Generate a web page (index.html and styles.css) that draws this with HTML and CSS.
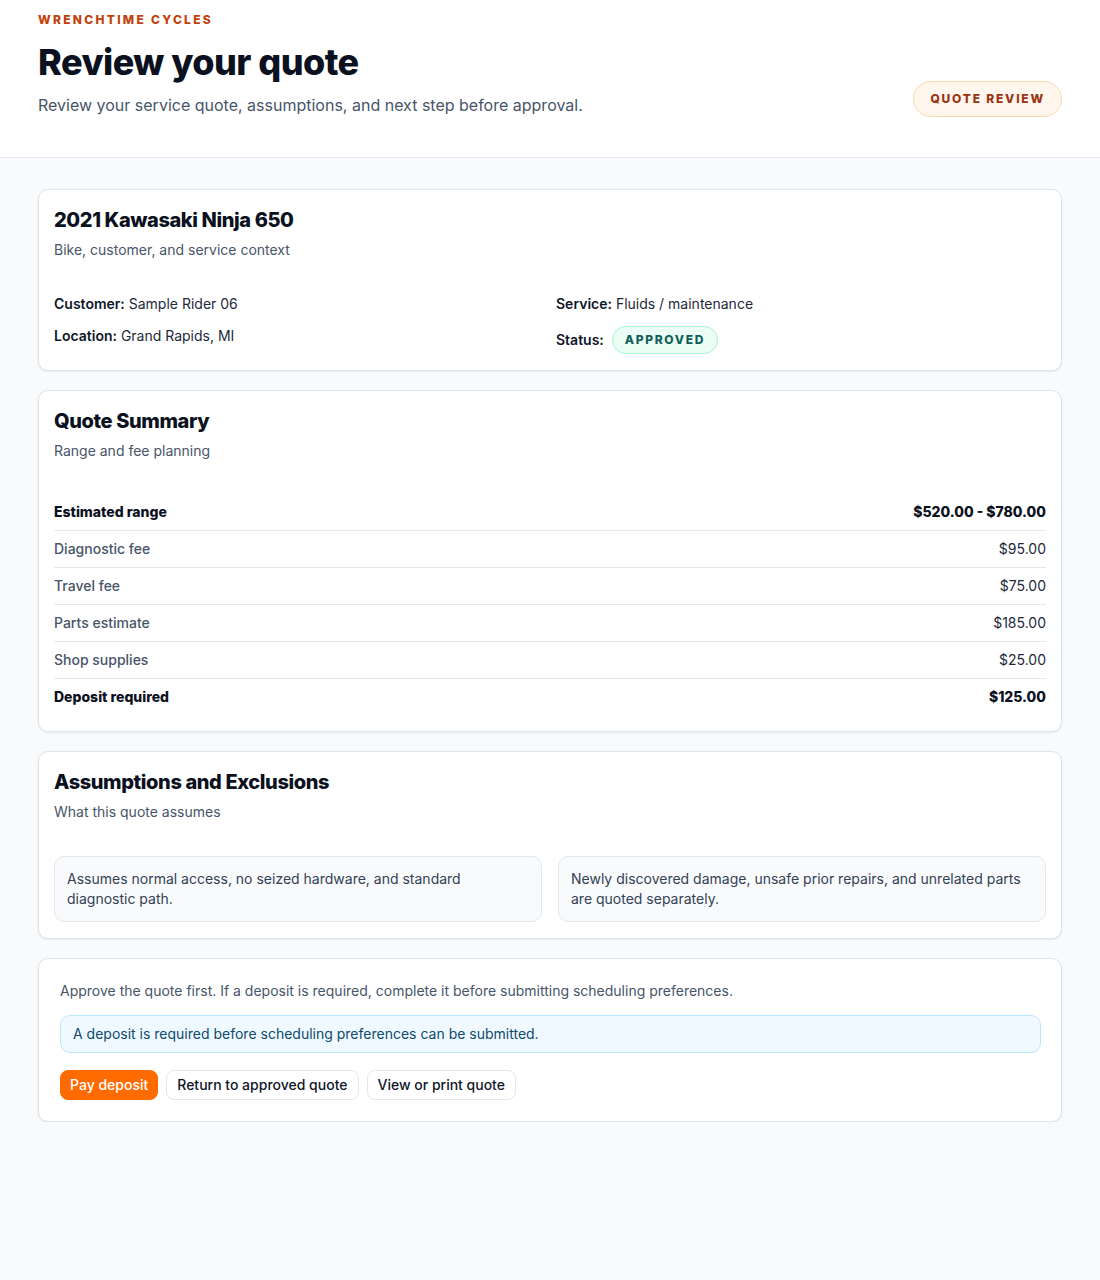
FILE: index.html
```html
<!DOCTYPE html>
<html lang="en">
<head>
    <meta charset="UTF-8">
    <meta name="viewport" content="width=device-width, initial-scale=1.0">
    <title>Review your quote</title>
    <link rel="stylesheet" href="styles.css">
</head>
<body>
    <header class="page-header">
        <div class="header-inner">
            <div class="header-text">
                <div class="brand">Wrenchtime Cycles</div>
                <h1>Review your quote</h1>
                <p class="lead">Review your service quote, assumptions, and next step before approval.</p>
            </div>
            <span class="pill pill-orange">Quote review</span>
        </div>
    </header>

    <main class="content">
        <section class="card">
            <h2>2021 Kawasaki Ninja 650</h2>
            <p class="card-sub">Bike, customer, and service context</p>
            <div class="details">
                <div class="detail"><strong>Customer:</strong> Sample Rider 06</div>
                <div class="detail"><strong>Service:</strong> Fluids / maintenance</div>
                <div class="detail"><strong>Location:</strong> Grand Rapids, MI</div>
                <div class="detail detail-status"><strong>Status:</strong> <span class="pill pill-green">Approved</span></div>
            </div>
        </section>

        <section class="card">
            <h2>Quote Summary</h2>
            <p class="card-sub">Range and fee planning</p>
            <div class="summary">
                <div class="row row-bold"><span>Estimated range</span><span>$520.00 - $780.00</span></div>
                <div class="row"><span>Diagnostic fee</span><span>$95.00</span></div>
                <div class="row"><span>Travel fee</span><span>$75.00</span></div>
                <div class="row"><span>Parts estimate</span><span>$185.00</span></div>
                <div class="row"><span>Shop supplies</span><span>$25.00</span></div>
                <div class="row row-bold"><span>Deposit required</span><span>$125.00</span></div>
            </div>
        </section>

        <section class="card">
            <h2>Assumptions and Exclusions</h2>
            <p class="card-sub">What this quote assumes</p>
            <div class="notes">
                <div class="note">Assumes normal access, no seized hardware, and standard diagnostic path.</div>
                <div class="note">Newly discovered damage, unsafe prior repairs, and unrelated parts are quoted separately.</div>
            </div>
        </section>

        <section class="card card-action">
            <p class="action-text">Approve the quote first. If a deposit is required, complete it before submitting scheduling preferences.</p>
            <div class="info">A deposit is required before scheduling preferences can be submitted.</div>
            <div class="buttons">
                <button class="btn btn-primary">Pay deposit</button>
                <button class="btn">Return to approved quote</button>
                <button class="btn">View or print quote</button>
            </div>
        </section>
    </main>
</body>
</html>
```

FILE: styles.css
```css
* {
    box-sizing: border-box;
}

body {
    margin: 0;
    font-family: Inter, "Noto Sans", Arial, sans-serif;
    background-color: #f8fafc;
    color: #0f172a;
}

.page-header {
    background-color: white;
    border-bottom: 1px solid #e2e8f0;
    padding: 12px 0 40px;
}

.header-inner {
    max-width: 1024px;
    margin: 0 auto;
    display: flex;
    justify-content: space-between;
    align-items: flex-end;
}

.brand {
    font-size: 12px;
    line-height: 16px;
    font-weight: 800;
    letter-spacing: 0.19em;
    text-transform: uppercase;
    color: #c2410c;
}

h1 {
    margin: 14px 0 0;
    font-size: 36px;
    line-height: 40px;
    font-weight: 800;
    letter-spacing: -0.015em;
    color: #0b1120;
}

.lead {
    margin: 11px 0 0;
    font-size: 16px;
    line-height: 24px;
    color: #475569;
}

.pill {
    display: inline-block;
    border-radius: 999px;
    font-size: 12px;
    font-weight: 800;
    letter-spacing: 0.15em;
    text-transform: uppercase;
}

.pill-orange {
    padding: 9px 16px;
    line-height: 16px;
    background-color: #fff7ed;
    border: 1px solid #fed7aa;
    color: #9a3412;
}

.pill-green {
    padding: 5px 12px;
    line-height: 16px;
    background-color: #ecfdf5;
    border: 1px solid #a7f3d0;
    color: #115e59;
    letter-spacing: 0.14em;
}

.content {
    max-width: 1024px;
    margin: 31px auto 0;
    display: flex;
    flex-direction: column;
    gap: 19px;
}

.card {
    background-color: white;
    border: 1px solid #dfe4ea;
    border-radius: 10px;
    box-shadow: 0 1px 2px rgba(15, 23, 42, 0.08);
    padding: 16px 15px;
}

h2 {
    margin: 0;
    font-size: 20px;
    line-height: 28px;
    font-weight: 800;
    letter-spacing: -0.02em;
    color: #0b1120;
}

.card-sub {
    margin: 6px 0 0;
    font-size: 14px;
    line-height: 20px;
    color: #475569;
}

.details {
    margin-top: 34px;
    display: grid;
    grid-template-columns: 1fr 1fr;
    column-gap: 12px;
    row-gap: 12px;
    font-size: 14px;
    line-height: 20px;
    color: #1e293b;
}

.detail strong {
    font-weight: 600;
    color: #0f172a;
}

.detail-status {
    display: flex;
    align-items: center;
    gap: 8px;
}

.summary {
    margin-top: 33px;
    font-size: 14px;
    line-height: 20px;
}

.row {
    display: flex;
    justify-content: space-between;
    padding: 8px 0;
    border-bottom: 1px solid #e2e8f0;
    color: #475569;
    font-weight: 500;
}

.row span:last-child {
    color: #1e293b;
    font-weight: 400;
}

.row:last-child {
    border-bottom: none;
}

.row-bold,
.row-bold span:last-child {
    font-weight: 800;
    color: #0b1120;
}

.notes {
    margin-top: 34px;
    display: grid;
    grid-template-columns: 1fr 1fr;
    gap: 16px;
}

.note {
    background-color: #f8fafc;
    border: 1px solid #e2e8f0;
    border-radius: 10px;
    padding: 12px;
    font-size: 14px;
    line-height: 20px;
    color: #334155;
}

.card-action {
    padding: 20px 20px 21px 21px;
}

.action-text {
    margin: 0;
    font-size: 14px;
    line-height: 24px;
    color: #475569;
}

.info {
    margin-top: 12px;
    padding: 8px 12px;
    background-color: #f0f9ff;
    border: 1px solid #bae6fd;
    border-radius: 10px;
    font-size: 14px;
    line-height: 20px;
    color: #0c4a6e;
}

.buttons {
    margin-top: 17px;
    display: flex;
    gap: 8px;
}

.btn {
    font-family: inherit;
    font-size: 14px;
    line-height: 18px;
    font-weight: 500;
    padding: 5px 10px;
    border-radius: 8px;
    border: 1px solid #e2e8f0;
    background-color: white;
    color: #0f172a;
    cursor: pointer;
}

.btn-primary {
    background-color: #ff6b00;
    border-color: #ff6b00;
    color: white;
    padding: 5px 9px;
}
```
